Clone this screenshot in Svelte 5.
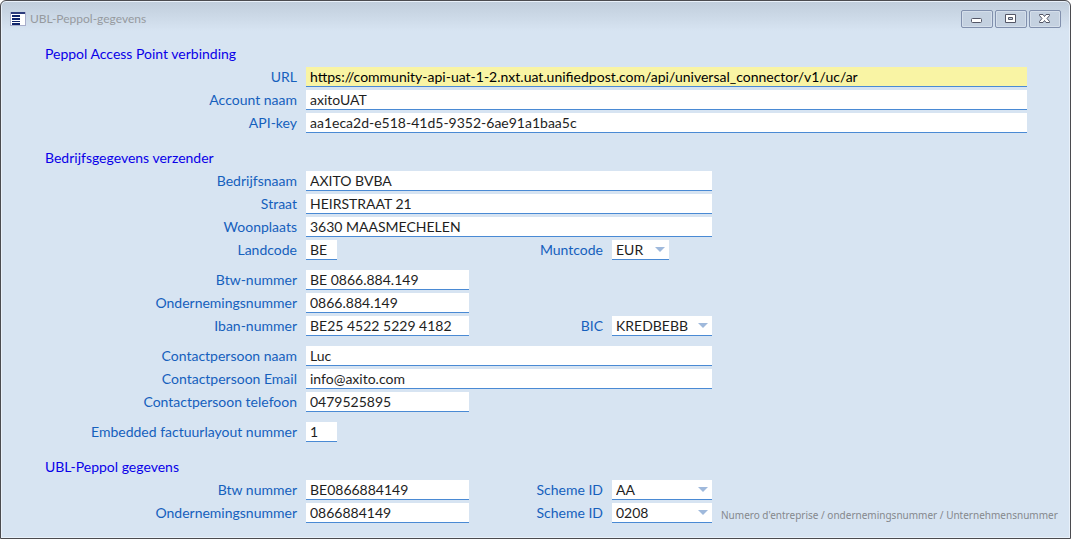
<script>
  const connection = [
    { id: 'url', label: 'URL', value: 'https://community-api-uat-1-2.nxt.uat.unifiedpost.com/api/universal_connector/v1/uc/ar', size: 'full', active: true },
    { id: 'account', label: 'Account naam', value: 'axitoUAT', size: 'full' },
    { id: 'apikey', label: 'API-key', value: 'aa1eca2d-e518-41d5-9352-6ae91a1baa5c', size: 'full' },
  ];
  const sender = [
    [
      { id: 'name', label: 'Bedrijfsnaam', value: 'AXITO BVBA', size: 'wide' },
      { id: 'street', label: 'Straat', value: 'HEIRSTRAAT 21', size: 'wide' },
      { id: 'city', label: 'Woonplaats', value: '3630 MAASMECHELEN', size: 'wide' },
      { id: 'country', label: 'Landcode', value: 'BE', size: 'tiny', pick: { id: 'currency', label: 'Muntcode', value: 'EUR', size: 'short' } },
    ],
    [
      { id: 'vat', label: 'Btw-nummer', value: 'BE 0866.884.149', size: 'medium' },
      { id: 'company', label: 'Ondernemingsnummer', value: '0866.884.149', size: 'medium' },
      { id: 'iban', label: 'Iban-nummer', value: 'BE25 4522 5229 4182', size: 'medium', pick: { id: 'bic', label: 'BIC', value: 'KREDBEBB', size: 'long' } },
    ],
    [
      { id: 'contact', label: 'Contactpersoon naam', value: 'Luc', size: 'wide' },
      { id: 'email', label: 'Contactpersoon Email', value: 'info@axito.com', size: 'wide' },
      { id: 'phone', label: 'Contactpersoon telefoon', value: '0479525895', size: 'medium' },
    ],
    [{ id: 'layout', label: 'Embedded factuurlayout nummer', value: '1', size: 'tiny' }],
  ];
  const peppol = [
    { id: 'pvat', label: 'Btw nummer', value: 'BE0866884149', size: 'medium', pick: { id: 'scheme1', label: 'Scheme ID', value: 'AA', size: 'long' } },
    { id: 'pcompany', label: 'Ondernemingsnummer', value: '0866884149', size: 'medium', pick: { id: 'scheme2', label: 'Scheme ID', value: '0208', size: 'long' }, note: "Numero d'entreprise / ondernemingsnummer / Unternehmensnummer" },
  ];
  const sections = [
    { title: 'Peppol Access Point verbinding', groups: [connection] },
    { title: 'Bedrijfsgegevens verzender', groups: sender },
    { title: 'UBL-Peppol gegevens', groups: [peppol] },
  ];
</script>

<main class="window">
  <header class="titlebar">
    <svg class="app-icon" width="16" height="14" viewBox="0 0 16 14" shape-rendering="crispEdges" aria-hidden="true">
      <rect x="0" y="0" width="16" height="14" rx="1" fill="#a9aecb" />
      <rect x="1" y="0" width="14" height="2" fill="#2d3c7c" />
      <rect x="1" y="2" width="14" height="11" fill="#fff" />
      <path d="M2 3h8v2H2zM2 6h8v2H2zM2 9h8v1H2zM2 11h8v2H2z" fill="#10246b" />
    </svg>
    <h1>UBL-Peppol-gegevens</h1>
    <div class="controls">
      <button type="button" aria-label="Minimaliseren">
        <svg width="12" height="12" viewBox="0 0 12 12"><rect x="0.5" y="5.5" width="10" height="4" rx="1" fill="#fff" stroke="#535666" /></svg>
      </button>
      <button type="button" aria-label="Maximaliseren">
        <svg width="12" height="12" viewBox="0 0 12 12"><path d="M.5 1.500h10v8H.5zM3.500 4.500v2h4v-2z" fill="#fff" fill-rule="evenodd" stroke="#535666" stroke-linejoin="round" /></svg>
      </button>
      <button type="button" aria-label="Sluiten">
        <svg width="12" height="12" viewBox="0 0 12 12"><path d="M.5 1.500h3.500l1.500 2 1.500-2h3.500v1l-2.500 3 2.500 3v1H7l-1.500-2-1.500 2H.5v-1l2.500-3-2.500-3z" fill="#fff" stroke="#535666" stroke-linejoin="round" /></svg>
      </button>
    </div>
  </header>

  <form>
    {#each sections as section}
      <section>
        <h2>{section.title}</h2>
        <div class="groups">
          {#each section.groups as group}
            <div class="group">
              {#each group as row}
                <div class="row">
                  <label class="primary" for={row.id}>{row.label}</label>
                  <div class="cell" class:fill={row.size === 'full'} class:half={row.size === 'wide'}>
                    <input class={row.size} class:active={row.active} id={row.id} type="text" value={row.value} />
                  </div>
                  {#if row.pick}
                    <label class="secondary" for={row.pick.id}>{row.pick.label}</label>
                    <div class="picker {row.pick.size}">
                      <select id={row.pick.id}><option>{row.pick.value}</option></select>
                      <svg width="10" height="5" viewBox="0 0 10 5" aria-hidden="true"><path d="M0 0h10L5 5z" fill="#9fb9dc" /></svg>
                    </div>
                  {/if}
                  {#if row.note}<span class="note">{row.note}</span>{/if}
                </div>
              {/each}
            </div>
          {/each}
        </div>
      </section>
    {/each}
  </form>
</main>

<style>
  :global(body) {
    margin: 0;
    background: #fff;
  }
  .window {
    box-sizing: border-box;
    min-height: 100vh;
    border: 1px solid #4b4b4f;
    border-radius: 6px 6px 0 0;
    background: linear-gradient(#c0cddb, #d7e4f2 30px);
    box-shadow: inset 0 0 0 1px #e9f1fa;
    font-family: Lato, "Noto Sans", sans-serif;
    font-size: 14px;
    line-height: 20px;
  }
  .titlebar {
    display: flex;
    align-items: center;
    height: 36px;
    padding: 0 9px;
    gap: 4px;
  }
  h1 {
    flex: 1;
    margin: 0;
    color: #969a9f;
    font-size: 12px;
    font-weight: 400;
  }
  .controls {
    display: flex;
    gap: 2px;
  }
  .controls button {
    display: grid;
    place-items: center;
    width: 32px;
    height: 18px;
    padding: 0;
    border: 1px solid #8190ad;
    border-radius: 2px;
    background: #c4d1e0;
    box-shadow: inset 0 0 0 1px #d5dfeb;
  }
  form {
    display: flex;
    flex-direction: column;
    gap: 15px;
    padding: 7px 43px 14px 44px;
  }
  h2 {
    margin: 0 0 3px;
    color: #0a00e8;
    font-size: 14px;
    font-weight: 400;
  }
  .groups {
    display: flex;
    flex-direction: column;
    gap: 10px;
  }
  .group {
    display: flex;
    flex-direction: column;
    gap: 3px;
  }
  .row {
    display: flex;
    gap: 9px;
    height: 20px;
  }
  label {
    flex: none;
    color: #1560bd;
    text-align: right;
    white-space: nowrap;
  }
  .primary {
    width: 252px;
  }
  .secondary {
    width: 125px;
  }
  .cell {
    display: flex;
    flex: none;
    width: 163px;
  }
  .cell.fill {
    flex: 1;
  }
  .cell.half {
    width: 406px;
  }
  input,
  select {
    box-sizing: border-box;
    width: 100%;
    height: 20px;
    margin: 0;
    padding: 0 4px;
    border: 0;
    border-bottom: 1px solid #4a8ad4;
    border-radius: 0;
    outline: 0;
    background: #fff;
    color: #1e1e1e;
    font: inherit;
  }
  select {
    appearance: none;
  }
  .tiny {
    width: 31px;
  }
  .active {
    background: #f9f4a4;
    color: #000;
  }
  .picker {
    position: relative;
    flex: none;
  }
  .picker svg {
    position: absolute;
    top: 7px;
    right: 4px;
    pointer-events: none;
  }
  .short {
    width: 57px;
  }
  .long {
    width: 100px;
  }
  .note {
    align-self: end;
    color: #85888d;
    font-family: "Noto Sans", sans-serif;
    font-size: 10px;
    line-height: 16px;
    white-space: nowrap;
  }
</style>
